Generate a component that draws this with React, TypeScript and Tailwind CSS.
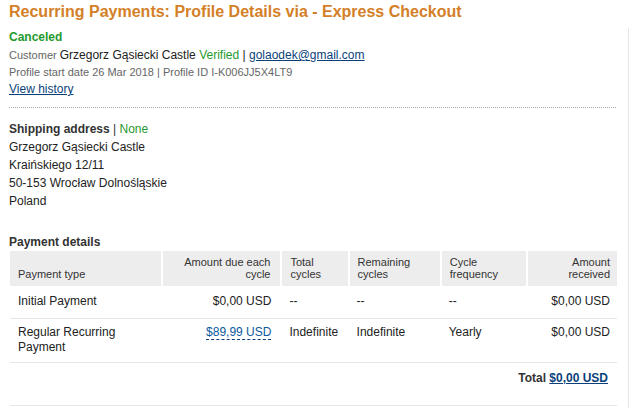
export default function App() {
  const headCell = 'align-bottom px-2 pt-[5px] pb-[6px] text-[11px] leading-[12px] font-normal text-[#333] border-l-2 border-white first:border-l-0';

  return (
    <div className="relative h-[408px] w-[636px] overflow-hidden bg-white font-['Liberation_Sans',Arial,sans-serif] text-[#222]">
      <div className="absolute right-[7px] top-[28px] bottom-0 w-px bg-[#e6e6e6]" />
      <div className="w-[617px] pl-[9px] pt-[1px]">
        <h1 className="text-[16px] font-bold leading-[22px] text-[#d47f28]">
          Recurring Payments: Profile Details via - Express Checkout
        </h1>
        <p className="mt-[6px] text-[12px] font-bold leading-[16px] text-[#1f9a2f]">Canceled</p>
        <p className="mt-[2px] text-[12px] leading-[17px]">
          <span className="text-[11px] text-[#666]">Customer </span>
          <span>Grzegorz Gąsiecki Castle </span>
          <span className="text-[#1f9a2f]">Verified</span>
          <span> | </span>
          <a className="text-[#0b3f7a] underline">golaodek@gmail.com</a>
        </p>
        <p className="text-[11px] leading-[17px] text-[#666]">
          Profile start date 26 Mar 2018 | Profile ID I-K006JJ5X4LT9
        </p>
        <a className="block text-[12px] leading-[16px] text-[#0b3f7a] underline">View history</a>
        <div className="mt-[10px] mr-px border-t border-dotted border-[#a8a8a8]" />

        <p className="mt-[12px] text-[12px] leading-[18px]">
          <span className="font-bold text-[#333]">Shipping address</span>
          <span className="text-[#333]"> | </span>
          <span className="text-[#1f9a2f]">None</span>
        </p>
        <div className="text-[12px] leading-[18px] text-[#222]">
          <p>Grzegorz Gąsiecki Castle</p>
          <p>Kraińskiego 12/11</p>
          <p>50-153 Wrocław Dolnośląskie</p>
          <p>Poland</p>
        </div>

        <p className="mt-[23px] text-[12px] font-bold leading-[18px] text-[#333]">Payment details</p>
        <table className="ml-px w-[607px] border-collapse text-[12px] text-[#222]">
          <thead>
            <tr className="bg-[#ededed]">
              <th className={headCell + ' w-[152px] text-left'}>Payment type</th>
              <th className={headCell + ' w-[119px] text-right pr-[10px]'}>Amount due each cycle</th>
              <th className={headCell + ' w-[67px] text-left'}>Total cycles</th>
              <th className={headCell + ' w-[92px] text-left'}>Remaining cycles</th>
              <th className={headCell + ' w-[86px] text-left'}>Cycle frequency</th>
              <th className={headCell + ' w-[90px] text-right pr-[7px]'}>Amount received</th>
            </tr>
          </thead>
          <tbody className="leading-[15px]">
            <tr className="border-b border-[#e6e6e6]">
              <td className="h-[32px] px-2 align-middle">Initial Payment</td>
              <td className="pr-[10px] text-right">$0,00 USD</td>
              <td className="px-2">--</td>
              <td className="px-2">--</td>
              <td className="px-2">--</td>
              <td className="pr-[7px] text-right">$0,00 USD</td>
            </tr>
            <tr className="border-b border-[#e6e6e6] align-top">
              <td className="h-[44px] px-2 pt-[6px]">Regular Recurring Payment</td>
              <td className="pr-[10px] pt-[6px] text-right">
                <span className="border-b border-dashed border-[#0b3f7a] text-[#0b5a9c]">$89,99 USD</span>
              </td>
              <td className="px-2 pt-[6px]">Indefinite</td>
              <td className="px-2 pt-[6px]">Indefinite</td>
              <td className="px-2 pt-[6px]">Yearly</td>
              <td className="pr-[7px] pt-[6px] text-right">$0,00 USD</td>
            </tr>
            <tr className="border-b border-[#e6e6e6]">
              <td colSpan={6} className="h-[43px] pr-[9px] pt-[8px] align-top text-right">
                <span className="font-bold text-[#333]">Total </span>
                <a className="font-bold text-[#0b3f7a] underline">$0,00 USD</a>
              </td>
            </tr>
          </tbody>
        </table>
      </div>
    </div>
  );
}
